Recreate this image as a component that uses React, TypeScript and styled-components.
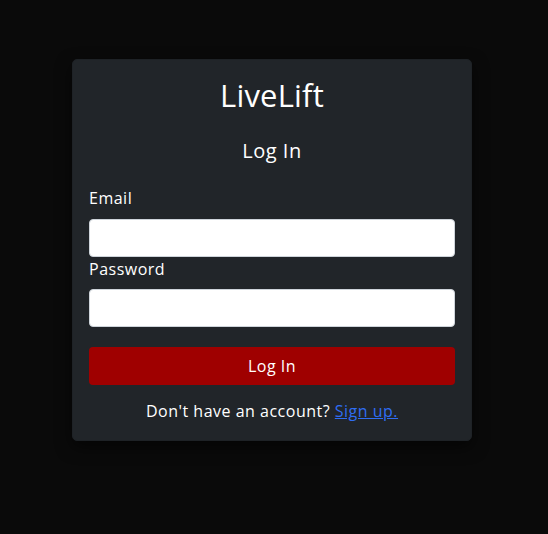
import React from "react";
import styled, { createGlobalStyle } from "styled-components";

const Global = createGlobalStyle`
  html, body { margin: 0; padding: 0; background: #0a0a0a; }
  body { font-family: "Open Sans", "Liberation Sans", sans-serif; color: #fff; letter-spacing: 0.5px; }
  * { box-sizing: border-box; }
`;

const Page = styled.div`
  min-height: 534px;
  display: flex;
  justify-content: center;
  align-items: flex-start;
  padding: 59px 4px 0 0;
`;

const Card = styled.div`
  width: 400px;
  background: #212529;
  border: 1px solid #1e2226;
  border-radius: 5px;
  padding: 16px 16px 17px;
  box-shadow: 0 6px 16px rgba(0, 0, 0, 0.55);
  display: flex;
  flex-direction: column;
`;

const Brand = styled.h1`
  margin: 0;
  font-size: 31px;
  line-height: 38px;
  font-weight: 400;
  text-align: center;
  letter-spacing: 0.2px;
`;

const Heading = styled.h2`
  margin: 25px 0 23px;
  font-size: 20px;
  line-height: 24px;
  font-weight: 400;
  text-align: center;
`;

const Field = styled.div`
  display: flex;
  flex-direction: column;
`;

const Label = styled.label`
  font-size: 16px;
  line-height: 24px;
  margin-bottom: ${(p: { $gap: number }) => p.$gap}px;
`;

const Input = styled.input`
  height: 38px;
  width: 100%;
  border: 1px solid #ced4da;
  border-radius: 4px;
  background: #fff;
  font-size: 16px;
  padding: 6px 12px;
`;

const Button = styled.button`
  margin-top: 20px;
  height: 38px;
  width: 100%;
  border: none;
  border-radius: 4px;
  background: #9f0000;
  color: #fff;
  font-family: inherit;
  letter-spacing: inherit;
  font-size: 16px;
  cursor: pointer;
`;

const Footer = styled.p`
  margin: 14px 0 0;
  font-size: 16px;
  line-height: 24px;
  text-align: center;
`;

const Link = styled.a`
  color: #2f6df2;
  text-decoration: underline;
`;

export default function App() {
  return (
    <>
      <Global />
      <Page>
        <Card>
          <Brand>LiveLift</Brand>
          <Heading>Log In</Heading>
          <Field>
            <Label $gap={9}>Email</Label>
            <Input type="email" />
          </Field>
          <Field>
            <Label $gap={8}>Password</Label>
            <Input type="password" />
          </Field>
          <Button>Log In</Button>
          <Footer>
            Don't have an account? <Link href="#">Sign up.</Link>
          </Footer>
        </Card>
      </Page>
    </>
  );
}
